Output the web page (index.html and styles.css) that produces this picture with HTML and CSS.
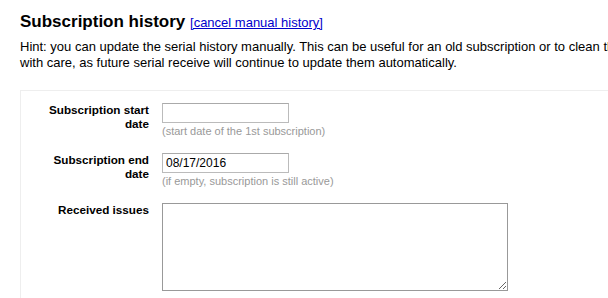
FILE: index.html
```html
<!DOCTYPE html>
<html lang="en">
<head>
  <meta charset="UTF-8">
  <title>Subscription history</title>
  <link rel="stylesheet" href="styles.css">
</head>
<body>
  <div class="page">
    <h3>Subscription history <a href="#">[cancel manual history]</a></h3>
    <p class="intro">Hint: you can update the serial history manually. This can be useful for an old subscription or to clean the existing history. Modify those fields<br>with care, as future serial receive will continue to update them automatically.</p>

    <fieldset class="rows">
      <ol>
        <li>
          <label for="histstartdate">Subscription start date</label>
          <input type="text" id="histstartdate" class="datefield">
          <span class="hint">(start date of the 1st subscription)</span>
        </li>
        <li>
          <label for="histenddate">Subscription end date</label>
          <input type="text" id="histenddate" class="datefield" value="08/17/2016">
          <span class="hint">(if empty, subscription is still active)</span>
        </li>
        <li>
          <label for="recievedlist">Received issues</label>
          <textarea id="recievedlist"></textarea>
        </li>
      </ol>
    </fieldset>
  </div>
</body>
</html>
```

FILE: styles.css
```css
body {
  margin: 0;
  padding: 0 20px;
  font-family: 'Liberation Sans', Arial, sans-serif;
  font-size: 13px;
  color: #000;
  background: #fff;
  overflow: hidden;
}
.page {
  width: 1000px;
}
h3 {
  font-size: 17px;
  margin: 12px 0 7px;
}
h3 a {
  font-size: 13px;
  font-weight: normal;
  color: #0000cc;
}
.intro {
  margin: 0;
  line-height: 16px;
}
fieldset.rows {
  border: 1px solid #eee;
  margin: 19px 0 0;
  padding: 12px 0 0 23px;
}
fieldset.rows ol {
  list-style: none;
  margin: 0;
  padding: 0;
}
fieldset.rows li {
  display: grid;
  grid-template-columns: 105px auto;
  grid-template-rows: auto auto;
  column-gap: 13px;
  justify-content: start;
  padding-bottom: 15px;
}
fieldset.rows label {
  grid-row: 1 / 3;
  text-align: right;
  font-weight: bold;
  font-size: 11.7px;
  line-height: 14px;
}
.datefield {
  width: 127px;
  height: 20px;
  box-sizing: border-box;
  border: 1px solid #bbb;
  border-top-color: #aaa;
  padding: 1px 3px;
  margin: 0;
  font-family: 'Liberation Sans', Arial, sans-serif;
  font-size: 12px;
}
.hint {
  font-size: 11px;
  color: #999;
  line-height: 14px;
  padding-top: 1px;
}
textarea {
  width: 346px;
  height: 88px;
  box-sizing: border-box;
  border: 1px solid #999;
  margin: 0;
  font-family: 'Liberation Sans', Arial, sans-serif;
}
```
